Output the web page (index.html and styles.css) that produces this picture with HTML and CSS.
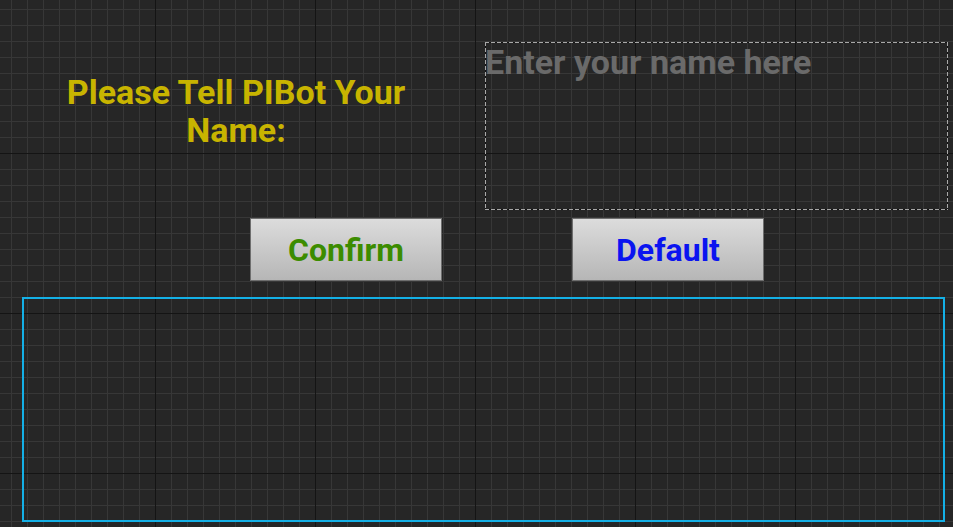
FILE: index.html
```html
<!DOCTYPE html>
<html lang="en">
<head>
<meta charset="utf-8">
<title>PIBot</title>
<link rel="stylesheet" href="styles.css">
</head>
<body>
<main class="canvas">
  <section class="top">
    <h1 class="title">Please Tell PIBot Your Name:</h1>
    <div class="name-input"><span class="placeholder">Enter your name here</span></div>
  </section>
  <section class="actions">
    <button class="btn btn-confirm">Confirm</button>
    <button class="btn btn-default">Default</button>
  </section>
  <section class="output"></section>
</main>
</body>
</html>
```
FILE: styles.css
```css
html, body {
  margin: 0;
  padding: 0;
}
body {
  width: 953px;
  height: 527px;
  overflow: hidden;
  background-color: #262626;
  background-image:
    linear-gradient(to right, #141414 1px, transparent 1px),
    linear-gradient(to bottom, #141414 1px, transparent 1px),
    linear-gradient(to right, #373737 1px, transparent 1px),
    linear-gradient(to bottom, #373737 1px, transparent 1px);
  background-size: 160px 160px, 160px 160px, 16px 16px, 16px 16px;
  background-position: 155px 0, 0 153px, 11px 0, 0 9px;
  font-family: Roboto, "Liberation Sans", sans-serif;
}
.canvas {
  display: flex;
  flex-direction: column;
}
.top {
  display: flex;
  padding-top: 42px;
}
.title {
  margin: 0 0 0 36px;
  width: 400px;
  padding-top: 31px;
  text-align: center;
  color: #c8b400;
  font-weight: 700;
  font-size: 34px;
  line-height: 38px;
}
.name-input {
  margin-left: 49px;
  width: 463px;
  height: 168px;
  box-sizing: border-box;
  padding: 2px 0;
  background-image:
    repeating-linear-gradient(to right, #a8a8a8 0 4px, #121212 4px 6px),
    repeating-linear-gradient(to right, #a8a8a8 0 4px, #121212 4px 6px),
    repeating-linear-gradient(to bottom, #a8a8a8 0 4px, #121212 4px 6px),
    repeating-linear-gradient(to bottom, #a8a8a8 0 4px, #121212 4px 6px);
  background-size: 100% 1px, 100% 1px, 1px 100%, 1px 100%;
  background-position: 0 0, 0 100%, 0 0, 100% 0;
  background-repeat: no-repeat;
}
.placeholder {
  display: block;
  color: #6a6a6a;
  font-weight: 700;
  font-size: 34px;
  line-height: 36px;
}
.actions {
  display: flex;
  gap: 130px;
  margin-top: 8px;
  padding-left: 250px;
}
.btn {
  width: 192px;
  height: 63px;
  box-sizing: border-box;
  border: 1px solid #6e6e6e;
  background: linear-gradient(to bottom, #dcdcdc, #b6b6b6);
  font-family: Roboto, "Liberation Sans", sans-serif;
  font-weight: 700;
  font-size: 32px;
  padding: 0;
  cursor: pointer;
}
.btn-confirm {
  color: #3c8c00;
}
.btn-default {
  color: #0a14f0;
}
.output {
  margin: 16px 0 0 22px;
  width: 923px;
  height: 225px;
  box-sizing: border-box;
  border: 2px solid #14b0e6;
}
```
